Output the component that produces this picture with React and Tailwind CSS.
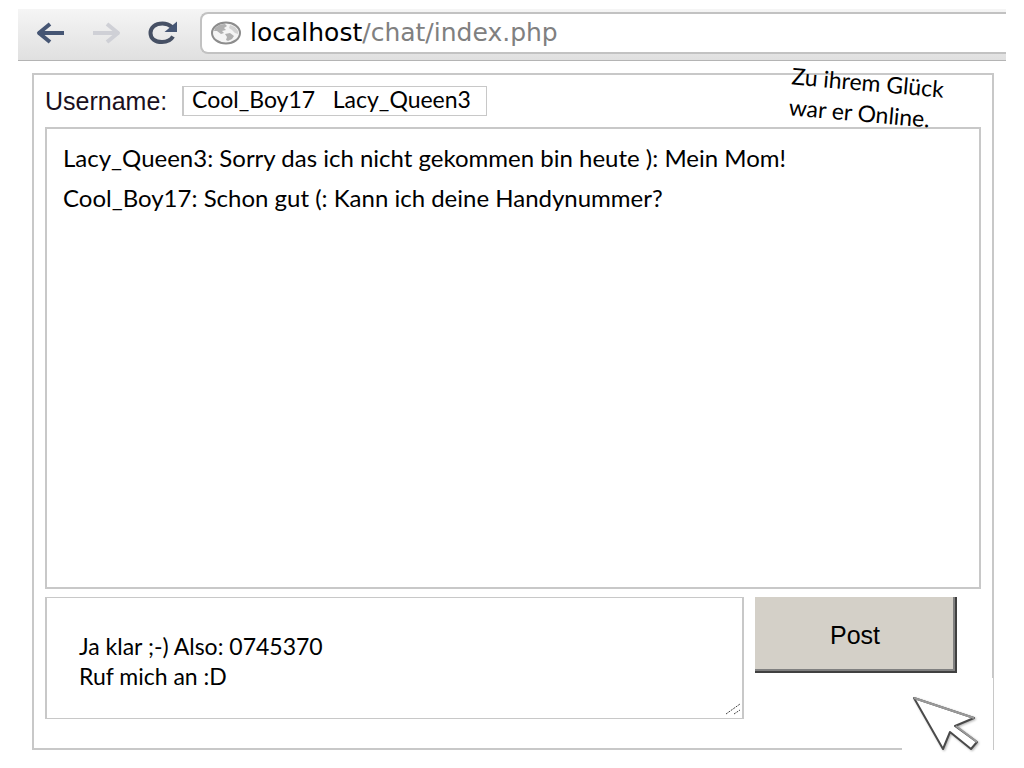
import { useState } from "react";

const messages = [
  { user: "Lacy_Queen3", text: "Sorry das ich nicht gekommen bin heute ): Mein Mom!" },
  { user: "Cool_Boy17", text: "Schon gut (: Kann ich deine Handynummer?" },
];

function BackIcon() {
  return (
    <svg width="32" height="24" viewBox="0 0 32 24" fill="none" stroke="#465674" strokeWidth="4">
      <path d="M3 12H29" />
      <path d="M15 3L4 12L15 21" strokeLinejoin="round" />
    </svg>
  );
}

function ForwardIcon() {
  return (
    <svg width="32" height="24" viewBox="0 0 32 24" fill="none" stroke="#cfd0d6" strokeWidth="4">
      <path d="M2 12H28" />
      <path d="M16 3L27 12L16 21" strokeLinejoin="round" />
    </svg>
  );
}

function ReloadIcon() {
  return (
    <svg width="32" height="24" viewBox="0 0 32 24" fill="none">
      <path
        d="M25 6C22 3.500 19 2.500 15.500 2.500C8 2.500 3.500 6.500 3.500 12C3.500 17.500 8 21 15 21C20 21 24 19 26 15.500"
        stroke="#465064"
        strokeWidth="4"
      />
      <path d="M30 0.500V11H17.500Z" fill="#465674" />
    </svg>
  );
}

function GlobeIcon() {
  return (
    <svg width="32" height="24" viewBox="0 0 32 24" className="shrink-0">
      <ellipse cx="16" cy="12" rx="14" ry="10.500" fill="#f4f4f4" stroke="#8c8c8c" strokeWidth="2" />
      <path d="M5 7L10 3.500L15 3L17 5L14 7L16 9L12 10L14 12L11 13L7 10L4 10Z" fill="#b0b0b0" />
      <path d="M15 13L20 12L24 15L22 18L18 20L16 19L17 16Z" fill="#b0b0b0" />
      <path d="M20 4L25 6L28 10L28 13L25 12L22 9L19 7Z" fill="#d2d2d2" />
    </svg>
  );
}

function Toolbar() {
  return (
    <header className="flex h-[52px] items-center border-b border-[#b4b4b4] bg-linear-to-b from-[#f5f5f5] to-[#e0e0e0] pl-[17px]">
      <nav className="flex w-[165px] shrink-0 gap-6 pb-1">
        <button type="button" aria-label="Zurück">
          <BackIcon />
        </button>
        <button type="button" aria-label="Vorwärts">
          <ForwardIcon />
        </button>
        <button type="button" aria-label="Neu laden">
          <ReloadIcon />
        </button>
      </nav>
      <div className="mb-1 flex h-[42px] flex-1 items-center gap-2 rounded-l-lg border-2 border-r-0 border-[#c2c2c2] bg-white pl-2">
        <GlobeIcon />
        <p className="font-['DejaVu_Sans',sans-serif] text-[25px] text-[#808080]">
          <span className="text-black">localhost</span>/chat/index.php
        </p>
      </div>
    </header>
  );
}

function Cursor() {
  return (
    <svg
      className="absolute right-[14px] -bottom-0.5 drop-shadow-[1px_1px_1px_rgba(0,0,0,0.3)]"
      width="68"
      height="56"
      viewBox="0 0 68 56"
      fill="#fff"
      strokeLinejoin="round"
    >
      <path d="M3 2L63 22L44 30L66 46L60 53L39 36L32 53Z" stroke="#4a4a4a" strokeWidth="2" />
      <path d="M3 2L63 22M45 30L66 46" stroke="#9a9a9a" strokeWidth="2" />
    </svg>
  );
}

export default function App() {
  const [names, setNames] = useState("Cool_Boy17   Lacy_Queen3");
  const [draft, setDraft] = useState("Ja klar ;-) Also: 0745370\nRuf mich an :D");

  return (
    <div className="bg-white px-[18px] py-[9px] font-['Lato',sans-serif] text-[23px] text-black">
      <Toolbar />
      <main className="relative mt-3 mr-3 ml-[14px] flex flex-col border-2 border-[#c8c8c8] px-[11px] pt-[11px] pb-[29px]">
        <div className="flex items-center">
          <label
            htmlFor="username"
            className="w-[137px] shrink-0 font-['Liberation_Sans',sans-serif] text-[25px] leading-[30px] text-[#1a1020]"
          >
            Username:
          </label>
          <input
            id="username"
            value={names}
            onChange={(e) => setNames(e.target.value)}
            className="h-[30px] w-[305px] border border-l-2 border-[#c8c8c8] pb-1 pl-2 outline-none"
          />
        </div>

        <section className="mt-[11px] min-h-[462px] space-y-2 border-2 border-[#c8c8c8] px-4 py-[13px] text-2xl leading-8">
          {messages.map((m) => (
            <p key={m.user}>
              {m.user}: {m.text}
            </p>
          ))}
        </section>

        <form className="mt-2 flex items-start gap-[11px] pr-6" onSubmit={(e) => e.preventDefault()}>
          <div className="relative flex flex-1">
            <textarea
              aria-label="Nachricht"
              value={draft}
              onChange={(e) => setDraft(e.target.value)}
              className="h-[122px] w-full resize-none border-2 border-y border-[#c8c8c8] px-8 pt-[33px] leading-[30px] outline-none"
            />
            <svg className="absolute right-1 bottom-1" width="14" height="12" viewBox="0 0 14 12" stroke="#444">
              <path d="M0 11L14 1M8 11L14 7" strokeDasharray="2 1" />
            </svg>
          </div>
          <button
            type="submit"
            className="h-[76px] w-[202px] border-r-2 border-b-2 border-[#404040] bg-[#d4d0c8] pt-1 font-['Liberation_Sans',sans-serif] text-[25px] shadow-[inset_-2px_-2px_0_#808080]"
          >
            Post
          </button>
        </form>

        {/* tilted caption over the frame */}
        <p className="absolute -top-2 right-[49px] rotate-5 leading-[31px]">
          Zu ihrem Glück
          <br />
          war er Online.
        </p>
        <div className="absolute -right-0.5 -bottom-0.5 h-[72px] w-[92px] border-r border-[#c8c8c8] bg-white">
          <Cursor />
        </div>
      </main>
    </div>
  );
}
